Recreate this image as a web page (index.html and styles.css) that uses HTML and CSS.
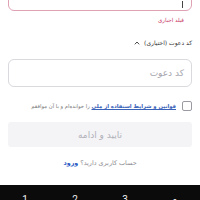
FILE: index.html
```html
<!DOCTYPE html>
<html lang="fa" dir="rtl">
<head>
<meta charset="utf-8">
<link rel="stylesheet" href="styles.css">
</head>
<body>
<div class="form">
  <div class="input input-error"><span class="caret"></span></div>
  <div class="error-text">فیلد اجباری</div>
  <div class="label-row"><span class="label">کد دعوت (اختیاری)</span><span class="chevron"><svg width="6" height="4" viewBox="0 0 6 4"><path d="M0.8 3.3 L3 1 L5.2 3.3" fill="none" stroke="#333" stroke-width="0.9"/></svg></span></div>
  <div class="input"><span class="placeholder">کد دعوت</span></div>
  <div class="check-row"><span class="checkbox"></span><span class="terms"><a class="link">قوانین و شرایط استفاده از ملی</a> را خوانده‌ام و با آن موافقم</span></div>
  <div class="button">تایید و ادامه</div>
  <div class="footer">حساب کاربری دارید؟ <span class="login">ورود</span></div>
</div>
<div class="keyboard">
  <span class="key">1</span><span class="key">2</span><span class="key">3</span><span class="key">-</span>
</div>
</body>
</html>
```
FILE: styles.css
```css
html, body {
  margin: 0;
  padding: 0;
  background: #ffffff;
  overflow: hidden;
}
body {
  width: 200px;
  height: 200px;
  font-family: "DejaVu Sans", sans-serif;
}
.form {
  direction: rtl;
  padding: 0 8px;
  display: flex;
  flex-direction: column;
}
.input {
  box-sizing: border-box;
  height: 28px;
  border: 1px solid #d9d9de;
  border-radius: 6px;
  display: flex;
  align-items: center;
  padding: 0 7px;
  margin-top: 12px;
}
.input-error {
  margin-top: -17px;
  border-color: #dea2b3;
  align-items: flex-end;
  padding-bottom: 2px;
}
.caret {
  width: 1px;
  height: 7px;
  background: #444;
  margin-right: 1px;
}
.error-text {
  margin-top: 5px;
  padding-right: 8px;
  font-size: 5.5px;
  line-height: 8px;
  color: #c8335f;
}
.label-row {
  margin-top: 15px;
  display: flex;
  align-items: center;
  gap: 4px;
  height: 8px;
}
.label {
  font-size: 6px;
  line-height: 8px;
  color: #333;
}
.chevron {
  display: flex;
  align-items: center;
}
.placeholder {
  font-size: 9px;
  color: #a6a6ae;
}
.check-row {
  margin-top: 14px;
  height: 10px;
  display: flex;
  align-items: center;
  gap: 6px;
}
.checkbox {
  box-sizing: border-box;
  width: 10px;
  height: 10px;
  border: 1px solid #9a9aa2;
  border-radius: 2px;
  flex: none;
}
.terms {
  font-size: 5.3px;
  color: #777;
  white-space: nowrap;
}
.link {
  color: #3a62b8;
  text-decoration: underline;
  font-weight: bold;
}
.button {
  margin-top: 11px;
  height: 25px;
  border-radius: 3px;
  background: #f4f4f6;
  color: #b0b0b8;
  font-size: 9px;
  display: flex;
  align-items: center;
  justify-content: center;
}
.footer {
  margin-top: 11px;
  font-size: 6.4px;
  line-height: 10px;
  color: #8a8a90;
  text-align: center;
}
.login {
  color: #1f57c3;
  font-weight: bold;
}
.keyboard {
  direction: ltr;
  margin-top: 17px;
  height: 15px;
  overflow: hidden;
  background: #0b0b0c;
  display: grid;
  grid-template-columns: repeat(4, 50px);
  padding-top: 9px;
  box-sizing: border-box;
}
.key {
  color: #f0f0f0;
  font-family: "Roboto", sans-serif;
  font-size: 10px;
  line-height: 12px;
  text-align: center;
}
```
